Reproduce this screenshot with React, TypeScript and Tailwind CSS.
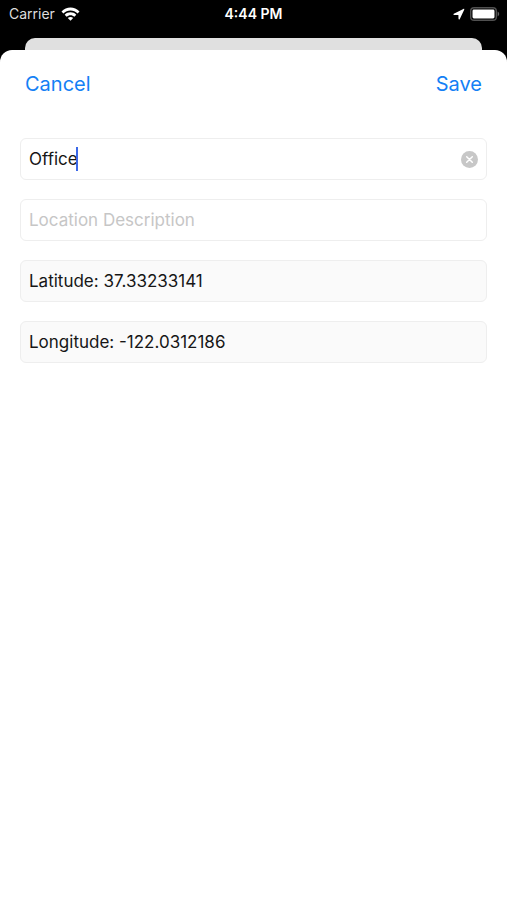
import { useState } from 'react';

const fieldBox = 'flex h-[42px] w-full items-center rounded-md border border-[#eeeeee] px-2';

function WifiIcon() {
  return (
    <svg width="19" height="14" viewBox="0 0 19 14" fill="white" aria-hidden="true">
      <path d="M0.5 4.4C5.4-0.7 13.6-0.7 18.5 4.4L16.6 6.4C12.7 2.5 6.3 2.5 2.4 6.4Z" />
      <path d="M3.7 7.7C6.9 4.5 12.1 4.5 15.3 7.7L13.4 9.7C11.2 7.6 7.8 7.6 5.6 9.7Z" />
      <path d="M6.8 10.9C8.3 9.6 10.7 9.6 12.2 10.9L9.5 13.7Z" />
    </svg>
  );
}

function LocationIcon() {
  return (
    <svg width="12" height="12" viewBox="0 0 12 12" fill="white" aria-hidden="true">
      <path d="M0.8 5.7L10.4 0.9C11.1 0.6 11.5 1 11.2 1.7L6.8 11C6.4 11.8 5.5 11.6 5.5 10.8L5.4 6.9L1.2 6.9C0.4 6.9 0.1 6.1 0.8 5.7Z" />
    </svg>
  );
}

function BatteryIcon() {
  return (
    <svg width="30" height="14" viewBox="0 0 30 14" aria-hidden="true">
      <rect x="0.7" y="0.7" width="25.6" height="12.6" rx="3.4" fill="none" stroke="#505050" strokeWidth="1.4" />
      <rect x="2.5" y="2.5" width="22" height="9" rx="1.4" fill="white" />
      <path d="M27.6 4.6C29.7 5.4 29.7 8.6 27.6 9.4Z" fill="#606060" />
    </svg>
  );
}

function StatusBar() {
  return (
    <div className="grid h-[38px] grid-cols-3 items-start px-[7px] pt-1 text-[14px] leading-5 text-white">
      <div className="flex h-5 items-center gap-[6px] pl-0.5">
        <span className="text-[#dddddd]">Carrier</span>
        <WifiIcon />
      </div>
      <span className="text-center font-semibold">4:44 PM</span>
      <div className="flex h-5 items-center justify-end gap-[5px]">
        <LocationIcon />
        <BatteryIcon />
      </div>
    </div>
  );
}

export default function App() {
  const [name, setName] = useState('Office');
  const [description, setDescription] = useState('');

  return (
    <div className="flex min-h-screen flex-col bg-black font-['Inter','Liberation_Sans',sans-serif]">
      <StatusBar />
      <div className="mx-[25px] h-3 rounded-t-[10px] bg-[#e0e0e0]" />

      <main className="flex-1 rounded-t-xl bg-white">
        <header className="flex items-center justify-between px-[25px] pt-5 text-[20px] leading-7 text-[#1480f5]">
          <button type="button">Cancel</button>
          <button type="submit" form="location-form">
            Save
          </button>
        </header>

        <form
          id="location-form"
          onSubmit={(e) => e.preventDefault()}
          className="flex flex-col gap-[19px] px-5 pt-10 text-[17px] leading-6 text-[#161616]"
        >
          <div className={fieldBox}>
            <label htmlFor="name" className="flex flex-1 items-center">
              <input
                id="name"
                type="text"
                aria-label="Name"
                value={name}
                onChange={(e) => setName(e.target.value)}
                className="field-sizing-content caret-transparent outline-none"
              />
              <span className="-ml-0.5 h-6 w-0.5 bg-[#3b68e8]" />
            </label>
            <button type="button" aria-label="Clear name" onClick={() => setName('')}>
              <svg width="17" height="17" viewBox="0 0 17 17" aria-hidden="true">
                <circle cx="8.5" cy="8.5" r="8.5" fill="#c7c7c7" />
                <path d="M5.7 5.7L11.3 11.3M11.3 5.7L5.7 11.3" stroke="white" strokeWidth="1.5" strokeLinecap="round" />
              </svg>
            </button>
          </div>

          <input
            type="text"
            aria-label="Location Description"
            placeholder="Location Description"
            value={description}
            onChange={(e) => setDescription(e.target.value)}
            className={`${fieldBox} outline-none placeholder:text-[#c6c6c6]`}
          />

          <input
            type="text"
            aria-label="Latitude"
            readOnly
            value="Latitude: 37.33233141"
            className={`${fieldBox} bg-[#fafafa] outline-none`}
          />

          <input
            type="text"
            aria-label="Longitude"
            readOnly
            value="Longitude: -122.0312186"
            className={`${fieldBox} bg-[#fafafa] outline-none`}
          />
        </form>
      </main>
    </div>
  );
}
